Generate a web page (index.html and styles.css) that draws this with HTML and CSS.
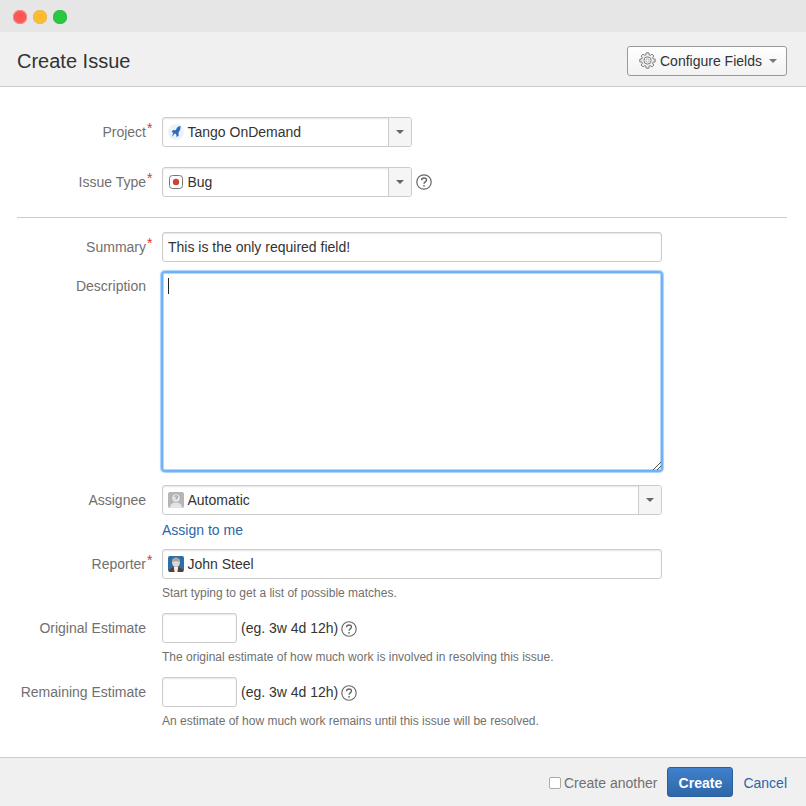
FILE: index.html
```html
<!DOCTYPE html>
<html lang="en">
<head>
<meta charset="utf-8">
<title>Create Issue</title>
<link rel="stylesheet" href="styles.css">
</head>
<body>
<div class="window">
  <div class="titlebar">
    <span class="light red"></span><span class="light yellow"></span><span class="light green"></span>
  </div>
  <header class="head">
    <h1>Create Issue</h1>
    <button class="config" type="button">
      <svg class="gear" viewBox="-8.500 -8.500 17 17" width="17" height="17"><polygon fill="#eeeeee" stroke="#6e6e6e" stroke-width=".9" stroke-linejoin="round" points="5.550,-1.700 7.680,-1.350 7.680,1.350 5.550,1.700 5.120,2.720 6.390,4.470 4.470,6.390 2.720,5.120 1.700,5.550 1.350,7.680 -1.350,7.680 -1.700,5.550 -2.720,5.120 -4.470,6.390 -6.390,4.470 -5.120,2.720 -5.550,1.700 -7.680,1.350 -7.680,-1.350 -5.550,-1.700 -5.120,-2.720 -6.390,-4.470 -4.470,-6.390 -2.720,-5.120 -1.700,-5.550 -1.350,-7.680 1.350,-7.680 1.700,-5.550 2.720,-5.120 4.470,-6.390 6.390,-4.470 5.120,-2.720"/><circle r="3.600" fill="#fff" stroke="#6e6e6e" stroke-width=".9"/><circle r="1.700" fill="none" stroke="#999" stroke-width=".8"/></svg>
      <span>Configure Fields</span><i class="caret small"></i>
    </button>
  </header>
  <main class="form">
    <div class="row r-project">
      <label>Project<b>*</b></label>
      <div class="select short">
        <div class="value">
          <svg class="ico" viewBox="0 0 16 16" width="16" height="16"><circle cx="8" cy="8" r="8" fill="#edf2f9"/><path fill="#2a6bbb" d="M12.500 2c.2 2.800-.6 4.900-2 6.500l.2 3-1.900 1.800-.6-2.900-1.300-1.200L4 13l1.200-4.500L3.500 8l1.600-2 2.500.2C8.900 3.400 10.500 2.200 12.500 2z"/></svg>
          <span>Tango OnDemand</span>
        </div>
        <div class="drop"><i class="caret"></i></div>
      </div>
    </div>
    <div class="row r-type">
      <label>Issue Type<b>*</b></label>
      <div class="select short">
        <div class="value">
          <svg class="ico" viewBox="0 0 16 16" width="16" height="16"><rect x="1.500" y="1.500" width="13" height="13" rx="3" fill="#fff" stroke="#777"/><circle cx="8" cy="8" r="3.200" fill="#d04437"/></svg>
          <span>Bug</span>
        </div>
        <div class="drop"><i class="caret"></i></div>
      </div>
      <svg class="help big" viewBox="0 0 16 16" width="16" height="16"><circle cx="8" cy="8" r="7.200" fill="none" stroke="#666" stroke-width="1.200"/><path fill="none" stroke="#666" stroke-width="1.400" d="M5.500 6.200C5.600 4.700 6.700 4 8 4c1.500 0 2.500.9 2.500 2.100 0 1.800-2.500 1.800-2.500 3.600"/><circle cx="8" cy="11.800" r=".9" fill="#666"/></svg>
    </div>
    <hr class="rule">
    <div class="row r-summary">
      <label>Summary<b>*</b></label>
      <div class="input wide"><span>This is the only required field!</span></div>
    </div>
    <div class="row r-desc">
      <label class="top">Description</label>
      <div class="textarea">
        <i class="cursor"></i>
        <svg class="grip" viewBox="0 0 9 9" width="9" height="9"><path stroke="#555" d="M1 9 9 1M5 9l4-4"/></svg>
      </div>
    </div>
    <div class="row r-assignee">
      <label>Assignee</label>
      <div class="select wide">
        <div class="value">
          <svg class="ico" viewBox="0 0 16 16" width="16" height="16"><rect width="16" height="16" rx="2" fill="#b5b5b5"/><circle cx="8" cy="6" r="3.800" fill="#e4e4e4"/><path fill="#e4e4e4" d="M2 16c0-4 2.800-5.500 6-5.500s6 1.500 6 5.500z"/><path fill="none" stroke="#9a9a9a" stroke-width="1.100" d="M6.600 5c.2-1.600 2.800-1.600 2.800 0 0 1-1.400 1-1.400 2.200"/></svg>
          <span>Automatic</span>
        </div>
        <div class="drop"><i class="caret"></i></div>
      </div>
    </div>
    <div class="assign"><a href="#">Assign to me</a></div>
    <div class="row r-reporter">
      <label>Reporter<b>*</b></label>
      <div class="input wide">
        <svg class="ico" viewBox="0 0 16 16" width="16" height="16"><rect width="16" height="16" rx="2" fill="#2f6ca8"/><path fill="#5f3d2a" d="M1 16c0-3.500 2.800-5 7-5s7 1.500 7 5z"/><path fill="#f0ece6" d="M5.800 11h4.400L9.500 16h-3z"/><ellipse cx="8" cy="6.500" rx="4" ry="4.600" fill="#e3d6c8"/><path fill="#a5a5a5" d="M4 6.500C3.700 3.300 5.600 1.600 8 1.600s4.300 1.700 4 4.900C11 4.800 5 4.800 4 6.500z"/></svg>
        <span>John Steel</span>
      </div>
    </div>
    <p class="note">Start typing to get a list of possible matches.</p>
    <div class="row r-estimate">
      <label>Original Estimate</label>
      <div class="input tiny"></div>
      <span class="eg">(eg. 3w 4d 12h)</span>
      <svg class="help" viewBox="0 0 16 16" width="16" height="16"><circle cx="8" cy="8" r="7.200" fill="none" stroke="#666" stroke-width="1.100"/><path fill="none" stroke="#666" stroke-width="1.300" d="M5.500 6.200C5.600 4.700 6.700 4 8 4c1.500 0 2.500.9 2.500 2.100 0 1.800-2.500 1.800-2.500 3.600"/><circle cx="8" cy="11.800" r=".9" fill="#666"/></svg>
    </div>
    <p class="note">The original estimate of how much work is involved in resolving this issue.</p>
    <div class="row r-estimate">
      <label>Remaining Estimate</label>
      <div class="input tiny"></div>
      <span class="eg">(eg. 3w 4d 12h)</span>
      <svg class="help" viewBox="0 0 16 16" width="16" height="16"><circle cx="8" cy="8" r="7.200" fill="none" stroke="#666" stroke-width="1.100"/><path fill="none" stroke="#666" stroke-width="1.300" d="M5.500 6.200C5.600 4.700 6.700 4 8 4c1.500 0 2.500.9 2.500 2.100 0 1.800-2.500 1.800-2.500 3.600"/><circle cx="8" cy="11.800" r=".9" fill="#666"/></svg>
    </div>
    <p class="note">An estimate of how much work remains until this issue will be resolved.</p>
  </main>
  <footer class="foot">
    <label class="another"><i class="check"></i><span>Create another</span></label>
    <button class="create" type="button">Create</button>
    <a class="cancel" href="#">Cancel</a>
  </footer>
</div>
</body>
</html>
```
FILE: styles.css
```css
* { box-sizing: border-box; }
html, body { margin: 0; padding: 0; background: #fff; }
body { font-family: "Liberation Sans", Arial, sans-serif; font-size: 14px; color: #333; }
.window { width: 806px; height: 806px; display: flex; flex-direction: column; overflow: hidden; }

.titlebar { height: 32px; background: #e6e6e6; display: flex; align-items: center; gap: 6.500px; padding: 0 0 0 13.250px; flex: none; }
.light { width: 13.500px; height: 13.500px; border-radius: 50%; margin-top: 2px; }
.red { background: #fc5753; box-shadow: inset 0 0 0 1px #ef8c88; }
.yellow { background: #fdbc2e; box-shadow: inset 0 0 0 1px #eeb860; }
.green { background: #28c83f; box-shadow: inset 0 0 0 1px #3db650; }

.head { height: 55px; flex: none; background: #f0f0f0; border-bottom: 1px solid #ccc; display: flex; align-items: center; justify-content: space-between; padding: 0 19px 0 17px; }
.head h1 { margin: 4px 0 0; font-size: 20px; font-weight: 400; color: #333; line-height: 28px; }
.config { width: 160px; height: 30px; margin-top: 3px; border: 1px solid #999; border-radius: 3px; background: linear-gradient(#fff, #f2f2f2); font: 14px "Liberation Sans", Arial, sans-serif; color: #333; display: flex; align-items: center; padding: 0 0 0 11px; }
.gear { margin-right: 4px; flex: none; }
.caret { display: block; width: 0; height: 0; border-left: 4px solid transparent; border-right: 4px solid transparent; border-top: 4px solid #666; }
.caret.small { margin-left: 7px; border-top-color: #777; }

.form { flex: 1; display: flex; flex-direction: column; }
.row { display: flex; align-items: center; }
.row > label { width: 146px; flex: none; margin-right: 16px; text-align: right; color: #707070; position: relative; line-height: 20px; }
.row > label b { position: absolute; left: 147px; top: -4px; color: #d9362b; font-weight: 400; font-size: 14px; }
.row > label.top { align-self: flex-start; margin-top: 4px; }

.r-project { height: 30px; margin-top: 30px; }
.r-type { height: 30px; margin-top: 20px; }
.rule { height: 1px; border: 0; background: #ccc; margin: 20px 19px 14px 17px; width: 770px; }
.r-summary { height: 30px; }
.r-desc { height: 199px; margin-top: 10px; align-items: flex-start; }
.r-assignee { height: 30px; margin-top: 14px; }
.assign { margin: 7px 0 0 162px; height: 16px; line-height: 16px; }
.assign a, .cancel { color: #2a67a8; text-decoration: none; }
.r-reporter { height: 30px; margin-top: 11px; }
.note { margin: 7px 0 0 162px; font-size: 12px; line-height: 14px; color: #707070; }
.r-estimate { height: 30px; margin-top: 13px; }

.select, .input { height: 30px; border: 1px solid #ccc; border-radius: 3px; background: #fff; box-shadow: inset 0 1px 2px rgba(0, 0, 0, .1); display: flex; align-items: center; }
.select.short { width: 250px; }
.wide { width: 500px; }
.tiny { width: 75px; }
.value { flex: 1; min-width: 0; display: flex; align-items: center; padding-left: 5px; }
.input { padding-left: 5px; }
.input > span, .value > span { color: #333; line-height: 20px; }
.ico { flex: none; margin-right: 3.500px; }
.drop { width: 23px; height: 28px; flex: none; border-left: 1px solid #ccc; border-radius: 0 2px 2px 0; background: #f5f5f5; display: flex; align-items: center; justify-content: center; }

.help { margin: 1px 0 0 3px; flex: none; }
.help.big { margin: 0 0 0 4px; }
.eg { margin-left: 4px; color: #333; }

.textarea { position: relative; width: 500px; height: 199px; border: 1px solid #6db0f5; border-radius: 3px; background: #fff; box-shadow: 0 0 0 1px #74b4f6, 0 0 1px 2px #a9d1fa, inset 0 0 0 1px #b5d7fa; }
.cursor { position: absolute; left: 5px; top: 5px; width: 1px; height: 16px; background: #222; }
.grip { position: absolute; right: 0; bottom: 0; }

.foot { height: 49px; flex: none; background: #f0f0f0; border-top: 1px solid #ccc; display: flex; align-items: center; justify-content: flex-end; padding-right: 19px; }
.another { display: flex; align-items: center; color: #707070; }
.another span { padding-top: 2px; }
.check { width: 12px; height: 12px; border: 1px solid #aaa; border-radius: 2px; background: #fff; margin: 2px 3px 0 0; }
.create { width: 66px; height: 30px; margin-left: 10px; border: 1px solid #2a5f9c; border-radius: 3px; background: linear-gradient(#4080cc, #2d67a8); color: #fff; font: 700 14px "Liberation Sans", Arial, sans-serif; padding: 2px 0 0; }
.cancel { margin-left: 10px; padding-top: 1px; }
```
